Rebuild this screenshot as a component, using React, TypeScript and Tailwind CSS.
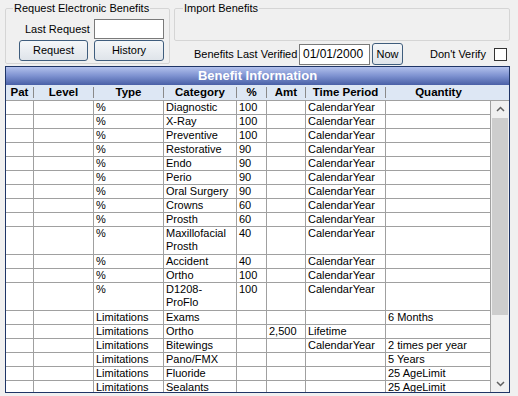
import React from 'react';

interface BenefitRow {
  type: string;
  category: string;
  pct: string;
  amt: string;
  period: string;
  qty: string;
  tall?: boolean;
}

const rows: BenefitRow[] = [
  { type: '%', category: 'Diagnostic', pct: '100', amt: '', period: 'CalendarYear', qty: '' },
  { type: '%', category: 'X-Ray', pct: '100', amt: '', period: 'CalendarYear', qty: '' },
  { type: '%', category: 'Preventive', pct: '100', amt: '', period: 'CalendarYear', qty: '' },
  { type: '%', category: 'Restorative', pct: '90', amt: '', period: 'CalendarYear', qty: '' },
  { type: '%', category: 'Endo', pct: '90', amt: '', period: 'CalendarYear', qty: '' },
  { type: '%', category: 'Perio', pct: '90', amt: '', period: 'CalendarYear', qty: '' },
  { type: '%', category: 'Oral Surgery', pct: '90', amt: '', period: 'CalendarYear', qty: '' },
  { type: '%', category: 'Crowns', pct: '60', amt: '', period: 'CalendarYear', qty: '' },
  { type: '%', category: 'Prosth', pct: '60', amt: '', period: 'CalendarYear', qty: '' },
  { type: '%', category: 'Maxillofacial\nProsth', pct: '40', amt: '', period: 'CalendarYear', qty: '', tall: true },
  { type: '%', category: 'Accident', pct: '40', amt: '', period: 'CalendarYear', qty: '' },
  { type: '%', category: 'Ortho', pct: '100', amt: '', period: 'CalendarYear', qty: '' },
  { type: '%', category: 'D1208-\nProFlo', pct: '100', amt: '', period: 'CalendarYear', qty: '', tall: true },
  { type: 'Limitations', category: 'Exams', pct: '', amt: '', period: '', qty: '6 Months' },
  { type: 'Limitations', category: 'Ortho', pct: '', amt: '2,500', period: 'Lifetime', qty: '' },
  { type: 'Limitations', category: 'Bitewings', pct: '', amt: '', period: 'CalendarYear', qty: '2 times per year' },
  { type: 'Limitations', category: 'Pano/FMX', pct: '', amt: '', period: '', qty: '5 Years' },
  { type: 'Limitations', category: 'Fluoride', pct: '', amt: '', period: '', qty: '25 AgeLimit' },
  { type: 'Limitations', category: 'Sealants', pct: '', amt: '', period: '', qty: '25 AgeLimit' },
];

const columns = [
  { label: 'Pat', width: 'w-[28px]' },
  { label: 'Level', width: 'w-[60px]' },
  { label: 'Type', width: 'w-[70px]' },
  { label: 'Category', width: 'w-[73px]' },
  { label: '%', width: 'w-[30px]' },
  { label: 'Amt', width: 'w-[39px]' },
  { label: 'Time Period', width: 'w-[80px]' },
  { label: 'Quantity', width: 'w-[105px]' },
];

function WinButton({ label, className }: { label: string; className: string }) {
  return (
    <button
      className={`flex items-center justify-center rounded-[3px] border border-[#3f5d7d] bg-gradient-to-b from-[#f5f7f9] to-[#dfe4ea] text-[11px] text-black whitespace-nowrap ${className}`}
    >
      {label}
    </button>
  );
}

function Cell({ width, text }: { width: string; text: string }) {
  return (
    <div className={`${width} shrink-0 border-r border-[#a0a0a0] pl-[2px] whitespace-pre-line leading-[13px]`}>
      {text}
    </div>
  );
}

export default function App() {
  return (
    <div className="w-[518px] h-[396px] overflow-hidden bg-[#f0f0f0] font-['Liberation_Sans',Arial,sans-serif] text-[11px] text-black whitespace-nowrap">
      {/* Top controls */}
      <div className="flex h-[66px]">
        <fieldset className="ml-[5px] mt-[2px] w-[165px] h-[62px] border border-[#d5d5d5] rounded-[2px]">
          <legend className="ml-[7px] px-[1px] leading-[13px]">Request Electronic Benefits</legend>
          <div className="flex items-center mt-[4px]">
            <span className="ml-[19px] w-[69px]">Last Request</span>
            <div className="w-[70px] h-[20px] border border-[#7a7a7a] bg-white" />
          </div>
          <div className="flex mt-[1px]">
            <WinButton label="Request" className="ml-[13px] w-[69px] h-[21px]" />
            <WinButton label="History" className="ml-[6px] w-[70px] h-[21px]" />
          </div>
        </fieldset>

        <div className="ml-[4px] w-[336px] flex flex-col">
          <fieldset className="mt-[2px] h-[39px] border border-[#d5d5d5] rounded-[2px]">
            <legend className="ml-[8px] px-[1px] leading-[13px]">Import Benefits</legend>
          </fieldset>
          <div className="flex items-center mt-[2px] h-[22px]">
            <span className="ml-[20px] w-[105px]">Benefits Last Verified</span>
            <div className="w-[71px] h-[21px] border border-[#7a7a7a] bg-white pl-[3px] text-[12px] leading-[19px]">
              01/01/2000
            </div>
            <WinButton label="Now" className="ml-[2px] w-[31px] h-[22px]" />
            <span className="ml-[27px]">Don't Verify</span>
            <div className="ml-[8px] w-[13px] h-[13px] border border-[#333333] bg-white" />
          </div>
        </div>
      </div>

      {/* Benefit grid */}
      <div className="ml-[5px] w-[505px] h-[327px] border border-[#1f3566] bg-white flex flex-col">
        <div className="h-[18px] shrink-0 bg-gradient-to-b from-[#b3c1ec] via-[#7d91d0] to-[#4a60a6] text-center text-white font-bold text-[13px] leading-[18px]">
          Benefit Information
        </div>
        <div className="h-[16px] shrink-0 flex bg-[#dde7f4] border-b border-[#a0a0a0] font-bold text-[11.5px]">
          {columns.map((c, i) => (
            <div key={c.label} className={`${c.width} shrink-0 flex items-center`}>
              <span className="flex-1 text-center leading-[15px]">{c.label}</span>
              {i < columns.length - 1 && <div className="w-px h-[11px] bg-[#8a8a8a]" />}
            </div>
          ))}
        </div>
        <div className="h-[291px] flex overflow-hidden">
          <div className="w-[485px] shrink-0">
            {rows.map((r, i) => (
              <div key={i} className={`flex border-b border-[#a0a0a0] ${r.tall ? 'h-[28px]' : 'h-[14px]'}`}>
                <Cell width="w-[28px]" text="" />
                <Cell width="w-[60px]" text="" />
                <Cell width="w-[70px]" text={r.type} />
                <Cell width="w-[73px]" text={r.category} />
                <Cell width="w-[30px]" text={r.pct} />
                <Cell width="w-[39px]" text={r.amt} />
                <Cell width="w-[80px]" text={r.period} />
                <Cell width="w-[105px]" text={r.qty} />
              </div>
            ))}
          </div>
          {/* Vertical scrollbar */}
          <div className="w-[18px] shrink-0 bg-[#f0f0f0] flex flex-col items-center">
            <svg className="mt-[5px] w-[9px] h-[6px] text-[#606060]" viewBox="0 0 9 6" fill="none" stroke="currentColor" strokeWidth={1.5}>
              <path d="M1 5L4.5 1.5L8 5" />
            </svg>
            <div className="mt-[6px] w-[16px] h-[197px] bg-[#cdcdcd]" />
            <div className="flex-1" />
            <svg className="mb-[5px] w-[9px] h-[6px] text-[#606060]" viewBox="0 0 9 6" fill="none" stroke="currentColor" strokeWidth={1.5}>
              <path d="M1 1L4.5 4.5L8 1" />
            </svg>
          </div>
        </div>
      </div>
    </div>
  );
}
